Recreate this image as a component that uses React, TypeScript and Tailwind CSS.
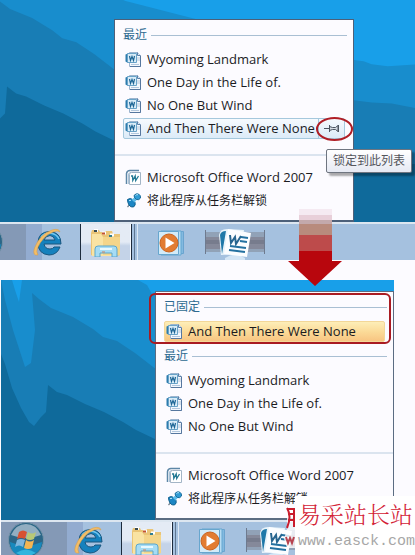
import { ReactNode } from "react";

interface MenuRowProps {
    icon: ReactNode;
    label: string;
    className?: string;
    children?: ReactNode;
}

const recent = ["Wyoming Landmark", "One Day in the Life of.", "No One But Wind"];

function DocIcon() {
    return (
        <svg viewBox="0 0 17 17" className="h-[17px] w-[17px] shrink-0">
            <path d="M4.5 1.5h8l3 3v11h-11z" fill="#f4f8fd" stroke="#9db5cf" />
            <path d="M12.5 1.5v3h3" fill="#dbe8f5" stroke="#5b7fa8" />
            <path d="M12 7h3M12 9h3M6 13.5h8" stroke="#b3c8de" fill="none" />
            <path d="M15.500 5v10.500H5" stroke="#56779f" fill="none" />
            <path d="M0.500 3.500L3 2.500V12L0.500 10.500z" fill="#2c7cae" />
            <path d="M2.500 2.500h9v9h-9z" fill="#d9ecf8" stroke="#69a3c8" />
            <path d="M4.500 5l1 4.500L7 5.500l1.500 4 1-4.500" fill="none" stroke="#1d6595" strokeWidth="1.200" />
        </svg>
    );
}

function WordIcon() {
    return (
        <svg viewBox="0 0 17 17" className="h-[17px] w-[17px] shrink-0">
            <path d="M1.500 15V4.500Q2 1.500 5 1.500h9" fill="none" stroke="#5d86a6" strokeWidth="1.500" />
            <path d="M3.500 15V5Q4 3.500 6 3.500" fill="none" stroke="#a9c3d8" />
            <path d="M4.500 15.500V5.500q0-2 2-2h9v12z" fill="#fff" stroke="#a3b5c6" />
            <path d="M6 7h1.500l.3 4.500L10.200 7l.5 4.500L13.500 7" fill="none" stroke="#247a94" strokeWidth="1.300" />
        </svg>
    );
}

function UnpinIcon() {
    return (
        <svg viewBox="0 0 17 17" className="h-[17px] w-[17px] shrink-0">
            <path d="M6 11l-3.500 4" stroke="#6d7f8e" strokeWidth="1.200" />
            <path d="M2.500 7.500q3-2 5 0l2.500 3q1 2.500-1.500 4.500-3 .5-4.500-2T2.500 7.500z" fill="#1c86c4" stroke="#11618f" />
            <path d="M6.500 7.500L10 5l2 2.500-2.500 3z" fill="#5dbbe8" />
            <path d="M9 3.500q2-2.500 4.500-1.500 2.500 1.500 2 4-1.500 2.500-4 1.500Q9 6 9 3.500z" fill="#2f9bd4" stroke="#14699a" />
            <path d="M10.500 3.500q1-1.200 2.500-.8M4 8.800q1-.8 2-.3" stroke="#b5e6fb" fill="none" />
        </svg>
    );
}

function PinIcon() {
    return (
        <svg viewBox="0 0 16 9" className="h-[9px] w-4" fill="none" stroke="#4c5560">
            <path d="M0 4.500h5" />
            <path d="M5.500 1v7M5.500 2.500l3 1h3l2.500-2v6l-2.500-2h-3l-3 1" fill="#d6dde5" />
            <path d="M14.500 1v7" />
        </svg>
    );
}

function Wallpaper({ viewBox }: { viewBox: string }) {
    return (
        <svg viewBox={viewBox} preserveAspectRatio="xMinYMax slice" className="absolute inset-0 h-full w-full">
            <path d="M0 0H800V240H0z" fill="#189fe9" />
            <path d="M0 0H11L14 10 18 22 21 0H137L146 5 151 14 165 20 394 79 402 80 410 83 426 85 455 83 800 83V240H0z" fill="#188dcd" />
            <path d="M0 0L4 20 12 50 24 87 30 83 34 50 31 13 38 19 50 28 72 37 92 49 102 57 116 61 134 73 156 90 394 119 410 121 430 122 455 127 800 127V240H0z" fill="#187db5" />
            <path d="M0 74L4 84 11 108 20 128 28 142 33 146 40 137 45 132 47 105 56 112 66 115 84 124 103 132 122 142 135 150 156 160 394 182 800 184V240H0z" fill="#0f6a9b" />
        </svg>
    );
}

function MenuHeader({ title }: { title: string }) {
    return (
        <h2 className="flex items-center gap-1 px-2 text-[12px] leading-4 text-[#2d6a90]">
            {title}
            <span className="mr-[-2px] h-px flex-1 bg-[#a9bfd3]" />
        </h2>
    );
}

function MenuList({ children }: { children: ReactNode }) {
    return <ul className="flex flex-col gap-0.5 px-2 py-px">{children}</ul>;
}

function MenuRow({ icon, label, className = "border-transparent", children }: MenuRowProps) {
    return (
        <li className={`relative flex h-[21px] items-stretch rounded-xs border ${className}`}>
            <button type="button" className="flex flex-1 items-center gap-[5px] whitespace-nowrap pl-px text-left">
                {icon}
                {label}
            </button>
            {children}
        </li>
    );
}

function ProgramRows() {
    return (
        <div className="mt-[14px] border-t-2 border-[#dbe4ef] pt-[10px] pb-2">
            <MenuList>
                <MenuRow icon={<WordIcon />} label="Microsoft Office Word 2007" />
                <MenuRow icon={<UnpinIcon />} label="将此程序从任务栏解锁" className="border-transparent text-[12px]" />
            </MenuList>
        </div>
    );
}

function StartIcon() {
    return (
        <svg viewBox="0 0 36 36" className="h-9 w-9">
            <circle cx="18" cy="18" r="17.500" fill="#2b6687" stroke="#7794a9" />
            <path d="M2 20q16 7 32 0-1 13-16 14T2 20z" fill="#1889bd" />
            <path d="M8 31q10-7 20 0-10 6-20 0z" fill="#32b5dd" />
            <path d="M3 13Q8 2 18 2t15 11q-15 6-30 0z" fill="#b6c7d4" opacity=".75" />
            <path d="M11 10q4-3 8 0l-2 7q-4-2-8 0z" fill="#d75232" />
            <path d="M20 10q4 3 8 0l-2 7q-4 2-8 0z" fill="#b9c875" />
            <path d="M9 18q4-2 8 0l-2 7q-4-3-8 0z" fill="#7fb5dc" />
            <path d="M18 18q4 3 8 0l-2 8q-4 2-8 0z" fill="#f4b552" />
        </svg>
    );
}

function ExplorerIcon() {
    return (
        <svg viewBox="0 0 30 28" className="h-7 w-[30px]">
            <path d="M0 26V4l1-3h7l1 2h4l2-1h6l1 3h7v21l-3 1H3z" fill="#eac577" />
            <path d="M1 5h9l2 3h17v17l-6 2H1z" fill="#f9e3a3" />
            <path d="M12 8h17v18H12z" fill="#f4d58a" />
            <path d="M3 1.500h4M11 4h4M19 6h4" stroke="#fff" strokeWidth="3" />
            <path d="M3 2h3" stroke="#384b52" strokeWidth="2" />
            <path d="M11 4.500h3" stroke="#c25230" strokeWidth="2" />
            <path d="M18 7h3" stroke="#317d91" strokeWidth="2" />
            <path d="M4 28v-8q0-3 3-3h16q3 0 3 3v8h-5v-4H9v4z" fill="#a6dcf4" stroke="#5ba6cd" />
            <path d="M9 20h12" stroke="#e7f8ff" strokeWidth="2" />
            <path d="M11 23h3" stroke="#cd825e" />
        </svg>
    );
}

function IeIcon() {
    return (
        <svg viewBox="0 0 30 28" className="h-7 w-[30px]">
            <path d="M28 16H11q1 5 6 5 3 0 4-2h6q-3 8-11 8Q5 26 5 15T16.500 3.500Q28 4 28 16zm-6-4q-1-4-5-4.500-5 .5-6 4.500z" fill="#1581bd" stroke="#1a577f" />
            <path d="M8 9q3-4 9-4 7 1 9 6" fill="none" stroke="#74c5ed" strokeWidth="1.500" />
            <path d="M5 27Q-1 28 1.500 20 7 6 19 2q7-2 8 2-2-2-7 0Q10 8 4.500 20q-1.500 4 .5 7z" fill="#f3bd68" stroke="#d99b3e" strokeWidth=".5" />
        </svg>
    );
}

function PlayerIcon() {
    return (
        <svg viewBox="0 0 27 26" className="h-[26px] w-[27px]">
            <path d="M5 1.500h20.500v22H9z" fill="#83b9df" stroke="#6ba4cf" />
            <path d="M3 1h20v24H3z" fill="#b7dcf2" stroke="#65a7d1" />
            <path d="M.5 1.500h20v23H.5z" fill="#d3ebf8" stroke="#67a6ce" />
            <circle cx="11" cy="13" r="9" fill="#e27c31" stroke="#cb6420" />
            <path d="M7.500 7.500v11l9-5.500z" fill="#fff" />
        </svg>
    );
}

function WordTaskIcon() {
    return (
        <svg viewBox="0 0 60 36" className="h-9 w-[60px]">
            <path d="M0 8h60v20H0z" fill="#91a2b7" />
            <path d="M0 13h60v12H0z" fill="#85899a" />
            <path d="M0 16h60v4H0z" fill="#777c8d" />
            <path d="M.5 6v24M59.500 6v24" stroke="#6e7a8e" />
            <path d="M20 34q10-7 20 0v2H20z" fill="#d3e5f5" />
            <path d="M16 31l-2-20q1-6 8-6l17 1-4 24z" fill="#e8f3fa" />
            <path d="M17 30l-2-19q1-4 6-4z" fill="#1f78a8" />
            <path d="M23 5l23 4-4 24-23-3z" fill="#fbfdff" />
            <path d="M25 11l1 8 4-6 1 7 5-8" fill="none" stroke="#27658f" strokeWidth="2" />
            <path d="M36 13l7 1M35 17l7 1M25 22l16 2M24 26l16 2" stroke="#2471a0" strokeWidth="2" />
        </svg>
    );
}

function Taskbar({ className }: { className: string }) {
    return (
        <div className="overflow-hidden border-t-2 border-t-[#dce6f0] bg-[#a5c1df]">
            <nav className={`flex items-start ${className}`}>
                <button type="button" aria-label="Start" className="h-full w-[66px] shrink-0 bg-[#8499b6] pl-[7px]">
                    <StartIcon />
                </button>
                <button type="button" aria-label="Internet Explorer" className="flex h-full w-[54px] shrink-0 justify-start bg-linear-to-r from-[#93acd0] from-30% to-[#a5c1df] to-30% pt-1 pl-[7px]">
                    <IeIcon />
                </button>
                <button type="button" aria-label="Explorer" className="-mt-0.5 flex h-[40px] w-[52px] shrink-0 justify-center rounded-xs border border-[#1d2b3c] bg-linear-to-b from-[#e4ebf5] from-50% to-[#c4d3e8] to-60% pt-1.5 shadow-[inset_-1px_0_0_#f5f9ff]">
                    <ExplorerIcon />
                </button>
                <span className="ml-0.5 h-full w-1 shrink-0 border-x border-l-[#5e7691] border-r-[#dce8f4]" />
                <button type="button" aria-label="Media Player" className="ml-5 shrink-0 pt-1.5">
                    <PlayerIcon />
                </button>
                <button type="button" aria-label="Word" className="ml-5 shrink-0">
                    <WordTaskIcon />
                </button>
            </nav>
        </div>
    );
}

function Arrow() {
    return (
        <svg viewBox="0 0 54 77" className="absolute bottom-[-6px] left-[288px] z-10 h-[77px] w-[54px]">
            <path d="M11 0h33v6H11z" fill="#f5eaf2" />
            <path d="M11 6h33v5H11z" fill="#e8cfd9" />
            <path d="M11 11h33v4H11z" fill="#c3a9ac" />
            <path d="M11 15h33v11H11z" fill="#b88b7d" />
            <path d="M11 26h33v16H11z" fill="#bd4b4b" />
            <path d="M11 42h33v10h10L27 77 0 52h11z" fill="#b8060d" />
        </svg>
    );
}

function Watermark() {
    return (
        <div className="absolute right-[-21px] bottom-0 z-20 flex h-[60px] w-[120px] flex-col bg-white pl-[3px] whitespace-nowrap">
            <svg viewBox="0 0 12 42" className="absolute top-[11px] left-[-11px] h-[42px] w-3">
                <path d="M3 1h9v40H3L0 32 3 22z" fill="#fff" opacity=".8" />
                <path d="M3 1q5 8 0 20M4 2h6v18M4 7h6M4 13h6" fill="none" stroke="#c91c2d" strokeWidth="2" />
                <path d="M2 30l2 6 2-5 2 5 2-6" fill="none" stroke="#b84450" strokeWidth="2" />
            </svg>
            <span className="pt-1 font-['Noto_Serif_CJK_SC','Noto_Sans_CJK_SC',serif] text-[23px] leading-7 font-light text-[#d32135]">易采站长站</span>
            <span className="font-['Liberation_Mono',monospace] text-[15px] leading-7 text-[#a7a7a7]">www.easck.com</span>
        </div>
    );
}

export default function App() {
    return (
        <main className="overflow-hidden bg-[#fcfbff] font-['Open_Sans','Noto_Sans_CJK_SC',sans-serif] text-[13px] text-[#1b1b1f]">
            <section>
                <div className="relative pt-[19px]">
                    <Wallpaper viewBox="40 19 415 221" />
                    <div className="relative ml-[114px] w-[240px] border border-b-2 border-[#4d6079] bg-[#fcfbff]">
                        <div className="pt-[7px] pb-[5px]">
                            <MenuHeader title="最近" />
                        </div>
                        <MenuList>
                            {recent.map((name) => (
                                <MenuRow key={name} icon={<DocIcon />} label={name} />
                            ))}
                            <MenuRow
                                icon={<DocIcon />}
                                label="And Then There Were None"
                                className="border-[#a5c8dd] bg-linear-to-b from-[#f6fafe] to-[#dcebf8]"
                            >
                                <button type="button" aria-label="锁定到此列表" className="flex w-[26px] items-center justify-center border-l border-[#a5c8dd]">
                                    <PinIcon />
                                </button>
                                <span className="pointer-events-none absolute -top-0.5 -right-[9px] h-6 w-[37px] rounded-[50%] border-2 border-[#b01e26]" />
                                <span role="tooltip" className="absolute top-[30px] right-[-68px] z-10 rounded-xs border border-[#6f7580] bg-linear-to-b from-white to-[#e6e9f3] px-[6px] py-0.5 text-[12px] leading-[18px] whitespace-nowrap text-[#55565c] shadow-[3px_3px_2px_#00000055]">
                                    锁定到此列表
                                </span>
                            </MenuRow>
                        </MenuList>
                        <ProgramRows />
                    </div>
                </div>
                <Taskbar className="-ml-10 h-9" />
            </section>
            <div className="relative h-5">
                <Arrow />
            </div>
            <section className="relative mr-[21px] ml-px">
                <div className="relative pt-[11px]">
                    <Wallpaper viewBox="0 0 393 240" />
                    <div className="relative ml-auto w-[239px] border border-b-2 border-[#5b6c82] bg-[#fcfbff]">
                        <div className="relative pt-[7px] pb-px">
                            <MenuHeader title="已固定" />
                            <div className="pt-[5px]">
                                <MenuList>
                                    <MenuRow
                                        icon={<DocIcon />}
                                        label="And Then There Were None"
                                        className="border-[#f3d798] bg-linear-to-b from-[#fdeeb8] via-[#fbdb98] via-50% to-[#f8c582]"
                                    />
                                </MenuList>
                            </div>
                            <span className="pointer-events-none absolute top-px right-0.5 bottom-0 left-[-7px] rounded-md border-2 border-[#a91b22]" />
                        </div>
                        <div className="pt-1 pb-[5px]">
                            <MenuHeader title="最近" />
                        </div>
                        <MenuList>
                            {recent.map((name) => (
                                <MenuRow key={name} icon={<DocIcon />} label={name} />
                            ))}
                        </MenuList>
                        <ProgramRows />
                    </div>
                </div>
                <Taskbar className="h-[34px]" />
                <Watermark />
            </section>
        </main>
    );
}
